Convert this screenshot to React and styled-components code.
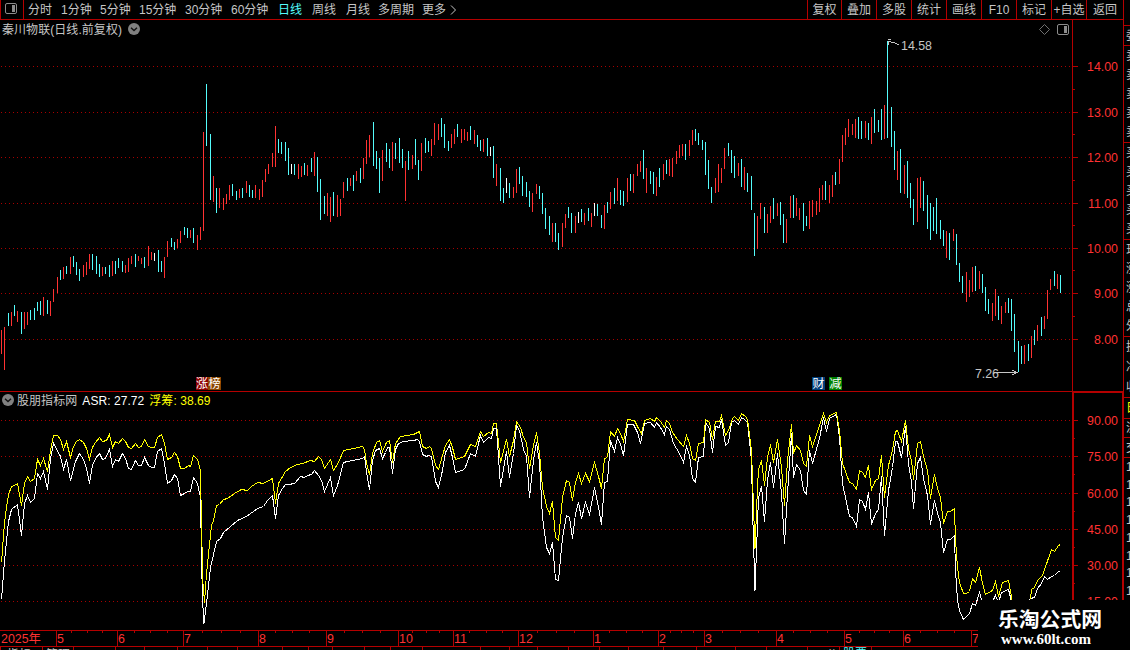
import styled, { createGlobalStyle } from 'styled-components'

const RED = '#b40000'
const LABEL = '#ff3232'
const TEXT = '#c6c6c6'
const FONT = '"Liberation Sans", "Noto Sans CJK SC", sans-serif'

const periods = [
    { name: '分时', width: 33 },
    { name: '1分钟', width: 39 },
    { name: '5分钟', width: 39 },
    { name: '15分钟', width: 46 },
    { name: '30分钟', width: 46 },
    { name: '60分钟', width: 47 },
    { name: '日线', width: 34, active: true },
    { name: '周线', width: 34 },
    { name: '月线', width: 32 },
    { name: '多周期', width: 44 },
    { name: '更多', width: 28 },
]

const tools = [
    { name: '复权', width: 34 },
    { name: '叠加', width: 35 },
    { name: '多股', width: 35 },
    { name: '统计', width: 35 },
    { name: '画线', width: 35 },
    { name: 'F10', width: 35 },
    { name: '标记', width: 35 },
    { name: '+自选', width: 35 },
    { name: '返回', width: 37 },
]

// colour key + x, high, low
const bars = `r1,330,354 r4,327,370 c8,313,326 r11,312,326 c14,305,316 r17,311,322 c21,312,334 r24,312,329 r27,312,325 c30,310,320
c34,308,320 c37,302,311 c40,301,315 r43,297,316 c47,300,314 r50,301,316 r53,289,302 r57,277,293 c60,270,280 r63,267,279
c66,266,274 r70,257,274 c73,256,267 c76,262,275 c79,269,281 r83,265,277 r86,262,275 r89,254,269 c92,254,270 c96,256,274
c99,264,277 r102,267,276 c105,267,274 c109,265,277 r112,261,276 c115,261,274 c118,258,268 c122,261,272 r125,265,273 r128,258,272
r131,256,264 c135,254,267 r138,256,261 r141,258,264 c144,257,268 r148,246,266 r151,252,260 w154,253,261 c158,250,272 c161,261,272
r164,257,278 r167,241,257 c171,238,247 c174,242,250 r177,239,248 r180,231,243 c184,227,235 c187,228,238 r190,230,238 c193,228,243
r197,235,250 r200,227,240 r203,132,231 c206,84,146 c210,134,200 r213,176,202 c216,188,213 r219,188,208 r223,198,210 r226,194,204
r229,185,200 c232,184,196 c236,191,200 r239,189,198 c242,188,198 r246,181,193 c249,185,197 c252,190,198 r255,185,198 r259,189,200
r262,180,197 r265,169,182 r268,164,174 r272,153,167 r275,126,167 c278,139,153 c281,142,154 c285,142,161 c288,148,175 w291,164,174
c294,164,175 r298,164,179 r301,166,177 c304,163,175 r307,165,176 c311,158,172 r314,152,176 c317,157,192 c320,179,220 c324,196,214
r327,193,216 r330,197,222 c333,192,216 r337,195,217 r340,199,216 r343,182,198 c347,178,191 r350,178,186 c353,175,191 r356,171,181
c360,168,183 r363,158,179 r366,140,164 r369,135,157 c373,122,166 c376,151,169 c379,158,193 r382,150,181 c386,143,162 c389,149,168
r392,142,171 c395,143,159 c399,138,163 c402,149,168 r405,161,201 c408,151,170 r412,155,169 c415,139,165 c418,160,180 r421,143,171
c425,138,153 c428,141,152 r431,139,156 r434,123,145 r438,124,140 c441,118,137 c444,124,148 c448,141,151 r451,134,148 r454,129,144
c457,124,137 r461,129,143 r464,129,140 r467,132,141 c470,126,140 r474,130,144 c477,135,147 c480,140,151 r483,139,152 c487,138,156
w490,147,156 c493,146,178 r496,164,186 c500,168,201 c503,188,203 w506,178,193 c509,183,198 r513,187,198 r516,169,193 c519,167,184
c522,176,196 c526,182,197 c529,191,207 r532,193,212 r536,184,194 c539,186,199 c542,193,214 c545,208,229 c549,216,235 r552,223,242
c555,223,242 c558,233,250 r562,223,247 r565,214,228 c568,207,218 c571,213,233 r575,216,233 w578,212,223 c581,209,222 r584,213,225
c588,208,221 r591,213,227 w594,203,216 c597,204,216 c601,215,228 r604,205,229 c607,202,213 r610,192,209 c614,188,204 r617,178,201
c620,190,205 c623,191,206 r627,178,202 c630,174,191 r633,174,193 r637,164,176 r640,161,172 c643,150,179 r646,168,193 c650,171,184
c653,172,194 r656,177,196 c659,168,187 r663,164,180 c666,160,174 r669,159,176 r672,158,177 r676,151,164 r679,145,158 r682,144,156
c685,144,160 r689,140,156 r692,130,145 c695,129,141 c698,133,145 c702,140,150 c705,142,175 c708,160,189 c711,187,203 r715,178,193
r718,164,192 r721,168,183 r724,148,169 c728,143,156 c731,150,173 c734,156,178 r738,163,176 c741,159,187 r744,167,190 c747,173,192
c751,176,210 c754,213,256 r757,216,249 r760,203,219 c764,207,233 r767,214,233 r770,206,223 c773,198,219 r777,203,216 c780,202,225
c783,214,243 r786,219,243 r790,196,218 c793,195,218 r796,198,216 r799,208,220 c803,203,231 c806,216,226 r809,201,229 r812,200,217
r816,201,215 r819,188,212 r822,185,200 c825,181,200 r829,185,203 r832,175,197 c835,172,185 r839,159,184 r842,135,162 r845,128,145
r848,119,137 r852,124,135 r855,119,138 c858,117,139 c861,121,139 r865,121,138 c868,123,140 r871,117,144 c874,109,133 c878,120,132
c881,109,140 r884,105,139 c887,41,138 c891,107,147 c894,131,170 r897,151,180 c900,149,193 r904,165,194 c907,161,198 c910,183,208
c913,199,225 r917,178,222 r920,177,208 c923,181,211 c927,195,229 c930,203,240 c933,207,231 c936,198,234 c940,220,239 c943,230,246
r946,231,258 c949,233,260 r953,229,241 c956,234,265 c959,263,282 c962,276,293 r966,272,302 r969,280,297 r972,267,292 c975,266,291
r979,271,289 c982,274,293 c985,287,311 c988,299,314 r992,303,321 r995,289,316 c998,296,320 r1001,306,324 r1005,302,313 c1008,298,313
c1011,299,331 c1014,314,352 c1018,341,372 c1021,346,364 r1024,345,364 c1028,344,361 r1031,336,358 c1034,330,345 r1037,325,341 c1041,317,336
r1044,316,329 r1047,290,319 r1050,279,290 c1054,271,286 r1057,274,289 c1060,275,293`
    .split(/\s+/)
    .map((item) => {
        const [ x, high, low ] = item.slice(1).split(',').map(Number)
        return { color: item[0], x, high, low }
    })

const barColors = { r: '#ff3232', c: '#54fcfc', w: '#ffffff' }

const asrLine = `1,599 4,560 6,541 8,521 11,509 17,504 21,535 24,503 27,495 30,502 34,498 37,473 40,478 43,471 47,489 50,458 53,443 60,456
63,469 66,459 70,480 75,461 79,453 83,459 86,468 89,483 92,465 95,458 99,453 102,459 105,458 109,449 112,466 115,459 118,461 122,453
125,458 128,468 131,469 135,460 138,465 141,465 144,457 148,465 151,467 154,467 157,451 161,448 164,463 167,483 171,480 174,474 177,478
180,495 184,493 187,491 190,491 193,477 197,483 200,497 201,557 202,600 203.5,623 206,603 210,567 216,541 220,538 223,532 230,526 237,520
246,516 257,508 263,506 267,500 272,495 275,518 278,495 282,488 285,484 288,484 294,483 300,476 304,477 307,475 311,474 314,470 318,475
321,480 324,491 330,477 333,495 337,485 343,462 347,461 357,459 362,458 364,456 367,478 369,489 372,460 375,450 379,448 382,458 385,452
387,447 389,447 392,473 395,449 398,443 403,441 413,440 417,439 419,441 422,454 426,456 428,455 431,456 435,481 438,487 442,470 445,452
449,445 452,457 455,472 464,469 470,453 475,456 478,443 480,435 483,442 488,437 491,438 493,428 496,428 500,486 506,451 509,477 513,453
516,425 519,430 523,449 526,456 529,497 533,460 536,442 539,462 542,517 546,547 549,553 552,542 555,579 558,580 562,537 566,515 569,517
572,538 575,513 578,502 581,518 585,502 589,514 592,498 594,487 598,507 601,524 604,482 607,481 610,440 614,451 617,437 620,444 623,455
627,424 633,424 637,432 640,443 644,423 650,422 654,427 656,422 660,427 664,434 666,426 669,429 673,443 679,453 683,462 686,446 689,455
692,478 695,482 698,457 703,456 705,422 709,428 712,452 715,426 719,427 721,419 725,445 728,442 731,422 734,420 738,424 741,417 744,419
747,422 751,460 752,507 754.5,590 756,550 758,497 761,486 764,521 767,480 770,462 773,487 777,453 781,493 784,543 787,493 791,433 793,477
796,464 800,470 803,490 806,494 809,450 812,463 819,438 823,417 826,431 829,418 836,414 839,437 842,483 849,516 852,517 856,526 859,499
862,501 865,509 868,492 871,524 875,513 878,509 881,476 884,535 888,490 892,467 895,441 897,441 901,457 905,426 908,463 911,482 913,508
917,463 920,457 923,478 927,495 930,524 934,500 937,513 940,522 943,552 947,539 950,539 954,535 955,570 957,600 959,610 963,619 969,613
972,603 975,605 979,592 982,603 992,601 995,595 998,602 1001,592 1008,589 1011,601 1020,612 1030,598 1034,597 1037,588 1041,583 1044,576
1047,579 1051,576 1054,575 1057,572 1060,570`

const floatLine = `1,562 4,522 6,507 8,494 11,486 14,485 17,483 21,505 24,483 27,476 30,481 34,478 37,459 40,465 43,458 47,471 50,450 53,435
57,435 60,439 63,449 66,441 70,457 73,446 76,441 79,439 83,442 86,448 89,459 92,447 95,442 99,437 102,441 106,440 109,434 112,447
115,441 118,443 122,438 125,441 128,447 131,448 135,443 138,447 141,446 144,439 148,446 151,447 154,447 157,437 161,434 164,443 167,459
171,457 174,452 177,456 180,468 184,468 188,465 190,466 193,455 197,459 200,470 201,527 202.5,583 204,602 206,573 211,525 213,520 216,505
219,504 223,499 227,498 234,493 241,489 247,490 251,486 257,482 263,483 272,478 275,503 278,483 285,471 290,467 297,464 302,463 310,460
314,461 318,456 321,459 324,468 330,459 333,470 338,462 343,450 353,448 362,446 364,449 366,463 369,474 372,453 376,442 379,440 382,451
386,442 389,440 392,462 395,443 400,436 407,435 413,434 419,431 422,446 426,448 429,446 431,448 435,465 438,469 442,455 445,445 449,439
452,447 455,459 464,456 470,444 475,446 478,437 480,431 483,436 488,432 491,433 493,423 496,423 500,462 506,439 509,456 513,440 516,421
520,427 523,437 526,442 529,468 533,445 536,432 539,453 542,487 546,506 549,513 552,501 555,537 558,540 562,497 566,480 569,482 572,500
575,482 578,473 581,483 585,473 589,481 592,470 594,462 598,476 601,488 604,458 607,457 610,431 614,436 617,428 620,433 623,441 627,419
634,420 637,426 641,433 644,420 650,418 654,421 656,417 660,421 664,427 666,420 669,423 672,432 677,439 683,446 686,435 689,443 692,458
695,460 698,443 703,442 705,419 709,422 712,439 715,421 719,421 721,415 725,435 728,430 732,418 734,416 738,420 741,413 745,416 747,419
751,450 754.5,548 757,487 758,469 761,460 764,485 767,457 770,444 773,462 777,439 781,467 784,505 787,460 791,424 793,453 796,445 800,450
803,463 806,466 809,435 812,446 819,425 823,413 826,422 829,415 836,412 839,430 842,463 849,482 852,483 856,489 859,470 862,472 865,477
868,465 871,489 875,480 878,478 881,455 884,497 888,465 892,450 895,431 897,430 901,441 905,420 908,448 911,460 913,479 917,443 920,441
923,456 927,470 930,498 934,474 937,488 940,497 943,523 947,511 950,511 954,508 955,540 957,567 959,582 963,593 966,593 969,591 972,578
975,582 979,567 982,583 985,594 992,590 995,581 998,596 1002,582 1008,580 1012,602 1020,612 1030,599 1031,589 1034,587 1037,580 1042,575
1051,549 1054,551 1058,545 1060,544`

const priceLevels = [
    [66, '14.00'], [112, '13.00'], [157, '12.00'], [203, '11.00'], [248, '10.00'], [293, '9.00'], [339, '8.00'],
]
const asrLevels = [
    [420, '90.00'], [456, '75.00'], [493, '60.00'], [529, '45.00'], [565, '30.00'], [601, '15.00'],
]

const months = [
    [56, '5'], [117, '6'], [183, '7'], [258, '8'], [326, '9'], [398, '10'], [453, '11'], [518, '12'],
    [593, '1'], [658, '2'], [704, '3'], [776, '4'], [844, '5'], [903, '6'], [971, '7'],
]
const weekTicks = [
    71, 87, 102, 134, 150, 167, 202, 221, 240, 275, 292, 309, 344, 362, 380, 412, 426, 439, 469, 486, 502, 537, 556, 574,
    609, 626, 642, 670, 681, 693, 722, 740, 758, 793, 810, 827, 859, 874, 889, 920, 937, 954,
]
const tabEdges = [
    0, 42, 73, 115, 144, 177, 207, 237, 282, 308, 332, 364, 390, 422, 480, 509, 537, 568, 599, 628, 663, 696, 735, 766, 807, 839, 871,
]

const quoteBlocks = [
    { height: 26, rows: [] },
    { height: 20, rows: ['委'] },
    { height: 97, rows: ['卖', '卖', '卖', '卖', '卖'] },
    { height: 97, rows: ['买', '买', '买', '买', '买'] },
    { height: 97, rows: ['现', '涨', '涨', '总', '外'] },
    { height: 61, rows: ['换', '净', '收'] },
    { height: 21, rows: ['日'], color: '#ffff00' },
    { height: 19, rows: ['流'] },
    { height: 20, rows: ['交'] },
    { height: 142, rows: ['1', '1', '1', '1', '1', '1', '1', '1'], last: true },
]

const Levels = ({ levels, tickFrom }) => (
    <g shapeRendering="crispEdges">
        {levels.map(([ y, label ]) => (
            <g key={label}>
                <line x1="1" x2="1072" y1={y + 0.5} y2={y + 0.5} stroke="#a80000" strokeDasharray="1 3" />
                <line x1={tickFrom} x2="1078" y1={y + 0.5} y2={y + 0.5} stroke={RED} />
                <AxisText x="1118" y={y + 5} textAnchor="end">{label}</AxisText>
            </g>
        ))}
        {levels.slice(1).map(([ y ], index) => {
            const middle = Math.floor((y + levels[index][0]) / 2)
            return <line key={y} x1={tickFrom} x2="1075" y1={middle + 0.5} y2={middle + 0.5} stroke={RED} />
        })}
    </g>
)

const Flag = ({ x, fill, width = 12, children }) => (
    <g>
        <rect x={x} y="377" width={width} height="13" fill={fill} />
        <FlagText x={x + width / 2} y="388" textAnchor="middle">{children}</FlagText>
    </g>
)

const RoundArrow = () => (
    <svg width="12" height="12" viewBox="0 0 12 12">
        <circle cx="6" cy="6" r="6" fill="#808080" />
        <path d="M3 4.8L6 7.5L9 4.8" fill="none" stroke="#101010" strokeWidth="1.4" />
    </svg>
)

const PanelIcon = () => (
    <svg width="12" height="11" viewBox="0 0 12 11">
        <rect x="0.5" y="0.5" width="11" height="10" rx="1.5" fill="none" stroke="#8c8c8c" />
        <rect x="7" y="2" width="3" height="7" fill="#8c8c8c" />
    </svg>
)

const App = () => {
    return (
        <Page>
            <GlobalStyle />
            <Main>
                <Toolbar>
                    <LayoutButton><PanelIcon /></LayoutButton>
                    <PeriodList>
                        {periods.map((item) => (
                            <Period key={item.name} $width={item.width} $active={item.active}>{item.name}</Period>
                        ))}
                        <svg width="6" height="10" viewBox="0 0 6 10">
                            <path d="M1 0.5L5.5 5L1 9.5" fill="none" stroke={TEXT} />
                        </svg>
                    </PeriodList>
                    <ToolList>
                        {tools.map((item) => (
                            <Tool key={item.name} $width={item.width}>{item.name}</Tool>
                        ))}
                    </ToolList>
                </Toolbar>

                <Panel $height={371}>
                    <Heading $gap={6}>
                        <Label>秦川物联(日线.前复权)</Label>
                        <RoundArrow />
                    </Heading>
                    <PanelActions>
                        <svg width="11" height="11" viewBox="0 0 11 11">
                            <path d="M5.5 0.5L10.5 5.5L5.5 10.5L0.5 5.5Z" fill="none" stroke="#707070" />
                        </svg>
                        <PanelIcon />
                    </PanelActions>
                    <svg width="1123" height="371" viewBox="0 20 1123 371">
                        <Levels levels={priceLevels} tickFrom={1073} />
                        <rect x="1072" y="20" width="1" height="371" fill={RED} />
                        <g shapeRendering="crispEdges">
                            {bars.map((bar) => (
                                <rect key={bar.x} x={bar.x} y={bar.high} width="1" height={bar.low - bar.high} fill={barColors[bar.color]} />
                            ))}
                        </g>
                        <g fill="none" stroke={TEXT} shapeRendering="crispEdges">
                            <path d="M888.5 41.5L894 42.5L899 45M888 39.5H891M888.5 41V44.5" />
                            <path d="M994 372.5H1017M1012 370L1017 372.5L1012 375" />
                        </g>
                        <NoteText x="901" y="50" textLength="31">14.58</NoteText>
                        <NoteText x="975" y="378" textLength="24">7.26</NoteText>
                        <Flag x={196} fill="#8c0000">涨</Flag>
                        <Flag x={208} width={13} fill="#8c4600">榜</Flag>
                        <Flag x={812} width={13} fill="#003c78">财</Flag>
                        <Flag x={829} width={13} fill="#008200">减</Flag>
                    </svg>
                </Panel>

                <Panel $height={239}>
                    <Heading $gap={5}>
                        <RoundArrow />
                        <IndicatorName>股朋指标网</IndicatorName>
                        <Label $color="#ffffff">ASR: 27.72</Label>
                        <Label $color="#ffff00">浮筹: 38.69</Label>
                    </Heading>
                    <svg width="1123" height="239" viewBox="0 391 1123 239">
                        <Levels levels={asrLevels} tickFrom={1074} />
                        <rect x="0" y="391" width="1072" height="1" fill={RED} />
                        <path d="M1073 630V392H1123" fill="none" stroke={RED} strokeWidth="2" />
                        <rect x="1122" y="391" width="1" height="239" fill={RED} />
                        <g fill="none" shapeRendering="crispEdges" transform="translate(0.5 0.5)">
                            <polyline points={asrLine} stroke="#ffffff" />
                            <polyline points={floatLine} stroke="#ffff00" />
                        </g>
                    </svg>
                </Panel>

                <svg width="1123" height="20" viewBox="0 630 1123 20">
                    <g fill={RED}>
                        <rect x="0" y="630" width="1123" height="1" />
                        <rect x="0" y="646" width="1123" height="1" />
                        {weekTicks.map((x) => <rect key={x} x={x} y="631" width="1" height="2" />)}
                        {tabEdges.map((x) => <rect key={x} x={x} y="647" width="1" height="3" />)}
                    </g>
                    <AxisText x="1" y="643">2025年</AxisText>
                    {months.map(([ x, label ]) => (
                        <g key={x}>
                            <rect x={x} y="630" width="1" height="16" fill={RED} />
                            <AxisText x={x + 1} y="643">{label}</AxisText>
                        </g>
                    ))}
                    <TabText x="7" y="659">指标</TabText>
                    <TabText x="46" y="659">管理</TabText>
                    <TabText x="826" y="659">公</TabText>
                    <TabText x="843" y="658" $active>股票</TabText>
                </svg>
            </Main>

            <Quotes>
                {quoteBlocks.map((block, index) => (
                    <QuoteBlock key={index} $height={block.height} $color={block.color} $last={block.last}>
                        {block.rows.map((row, i) => <span key={i}>{row}</span>)}
                    </QuoteBlock>
                ))}
            </Quotes>

            <SiteMark>
                <SiteName>乐淘公式网</SiteName>
                <SiteUrl>www.60lt.com</SiteUrl>
            </SiteMark>
        </Page>
    )
}

export default App

const GlobalStyle = createGlobalStyle`
    body {
        margin: 0;
        background: #000;
        overflow: hidden;
    }
    svg {
        display: block;
        flex: none;
    }
`

const Page = styled.div`
    position: relative;
    display: grid;
    grid-template-columns: 1123px 7px;
    width: 1130px;
    height: 650px;
    overflow: hidden;
    background: #000;
    color: ${TEXT};
    font-family: ${FONT};
    font-size: 12px;
    line-height: 18px;
    white-space: nowrap;
`
const Main = styled.div`
    display: flex;
    flex-direction: column;
`
const Toolbar = styled.div`
    display: flex;
    box-sizing: border-box;
    height: 20px;
    border-bottom: 1px solid ${RED};
`
const LayoutButton = styled.div`
    display: flex;
    align-items: center;
    box-sizing: border-box;
    width: 24px;
    padding: 0 0 2px 4px;
    border-left: 1px solid ${RED};
    border-right: 1px solid ${RED};
`
const PeriodList = styled.div`
    display: flex;
    align-items: center;
    flex: 1;
    padding-left: 4px;
`
const Period = styled.div`
    width: ${props => props.$width}px;
    color: ${props => props.$active ? '#54fcfc' : TEXT};
`
const ToolList = styled.div`
    display: flex;
`
const Tool = styled.div`
    box-sizing: border-box;
    width: ${props => props.$width}px;
    padding-top: 1px;
    border-left: 1px solid ${RED};
    text-align: center;
`
const Panel = styled.div`
    position: relative;
    height: ${props => props.$height}px;
`
const Heading = styled.div`
    position: absolute;
    top: 0;
    left: 2px;
    display: flex;
    align-items: center;
    gap: ${props => props.$gap}px;
    height: 18px;
`
const Label = styled.span`
    padding-top: 1px;
    color: ${props => props.$color || TEXT};
    letter-spacing: 0.06px;
`
const IndicatorName = styled(Label)`
    margin-left: -2px;
`
const PanelActions = styled.div`
    position: absolute;
    top: 4px;
    right: 54px;
    display: flex;
    gap: 7px;
`
const AxisText = styled.text`
    fill: ${LABEL};
    font-size: 12.4px;
`
const NoteText = styled.text`
    fill: ${TEXT};
    font-size: 12.4px;
`
const FlagText = styled.text`
    fill: #fff;
    font-size: 12px;
`
const TabText = styled.text`
    fill: ${props => props.$active ? '#54fcfc' : TEXT};
    font-size: 12px;
`
const Quotes = styled.div`
    display: flex;
    flex-direction: column;
    overflow: hidden;
    border-left: 1px solid ${RED};
`
const QuoteBlock = styled.div`
    display: flex;
    flex-direction: column;
    justify-content: space-around;
    flex: none;
    box-sizing: border-box;
    height: ${props => props.$height}px;
    padding-left: 2px;
    border-bottom: ${props => props.$last ? 'none' : `1px solid ${RED}`};
    color: ${props => props.$color || TEXT};
    line-height: 14px;
`
const SiteMark = styled.div`
    position: absolute;
    right: 0;
    bottom: 0;
    display: flex;
    flex-direction: column;
    box-sizing: border-box;
    width: 152px;
    height: 50px;
    padding: 6px 0 0 20px;
    background: #000;
    color: #fff;
`
const SiteName = styled.div`
    font-family: "Noto Sans CJK SC", sans-serif;
    font-size: 20.8px;
    font-weight: 700;
    line-height: 24px;
`
const SiteUrl = styled.div`
    padding-left: 3px;
    font-family: "Liberation Serif", serif;
    font-size: 15px;
    font-weight: 700;
    line-height: 18px;
`
